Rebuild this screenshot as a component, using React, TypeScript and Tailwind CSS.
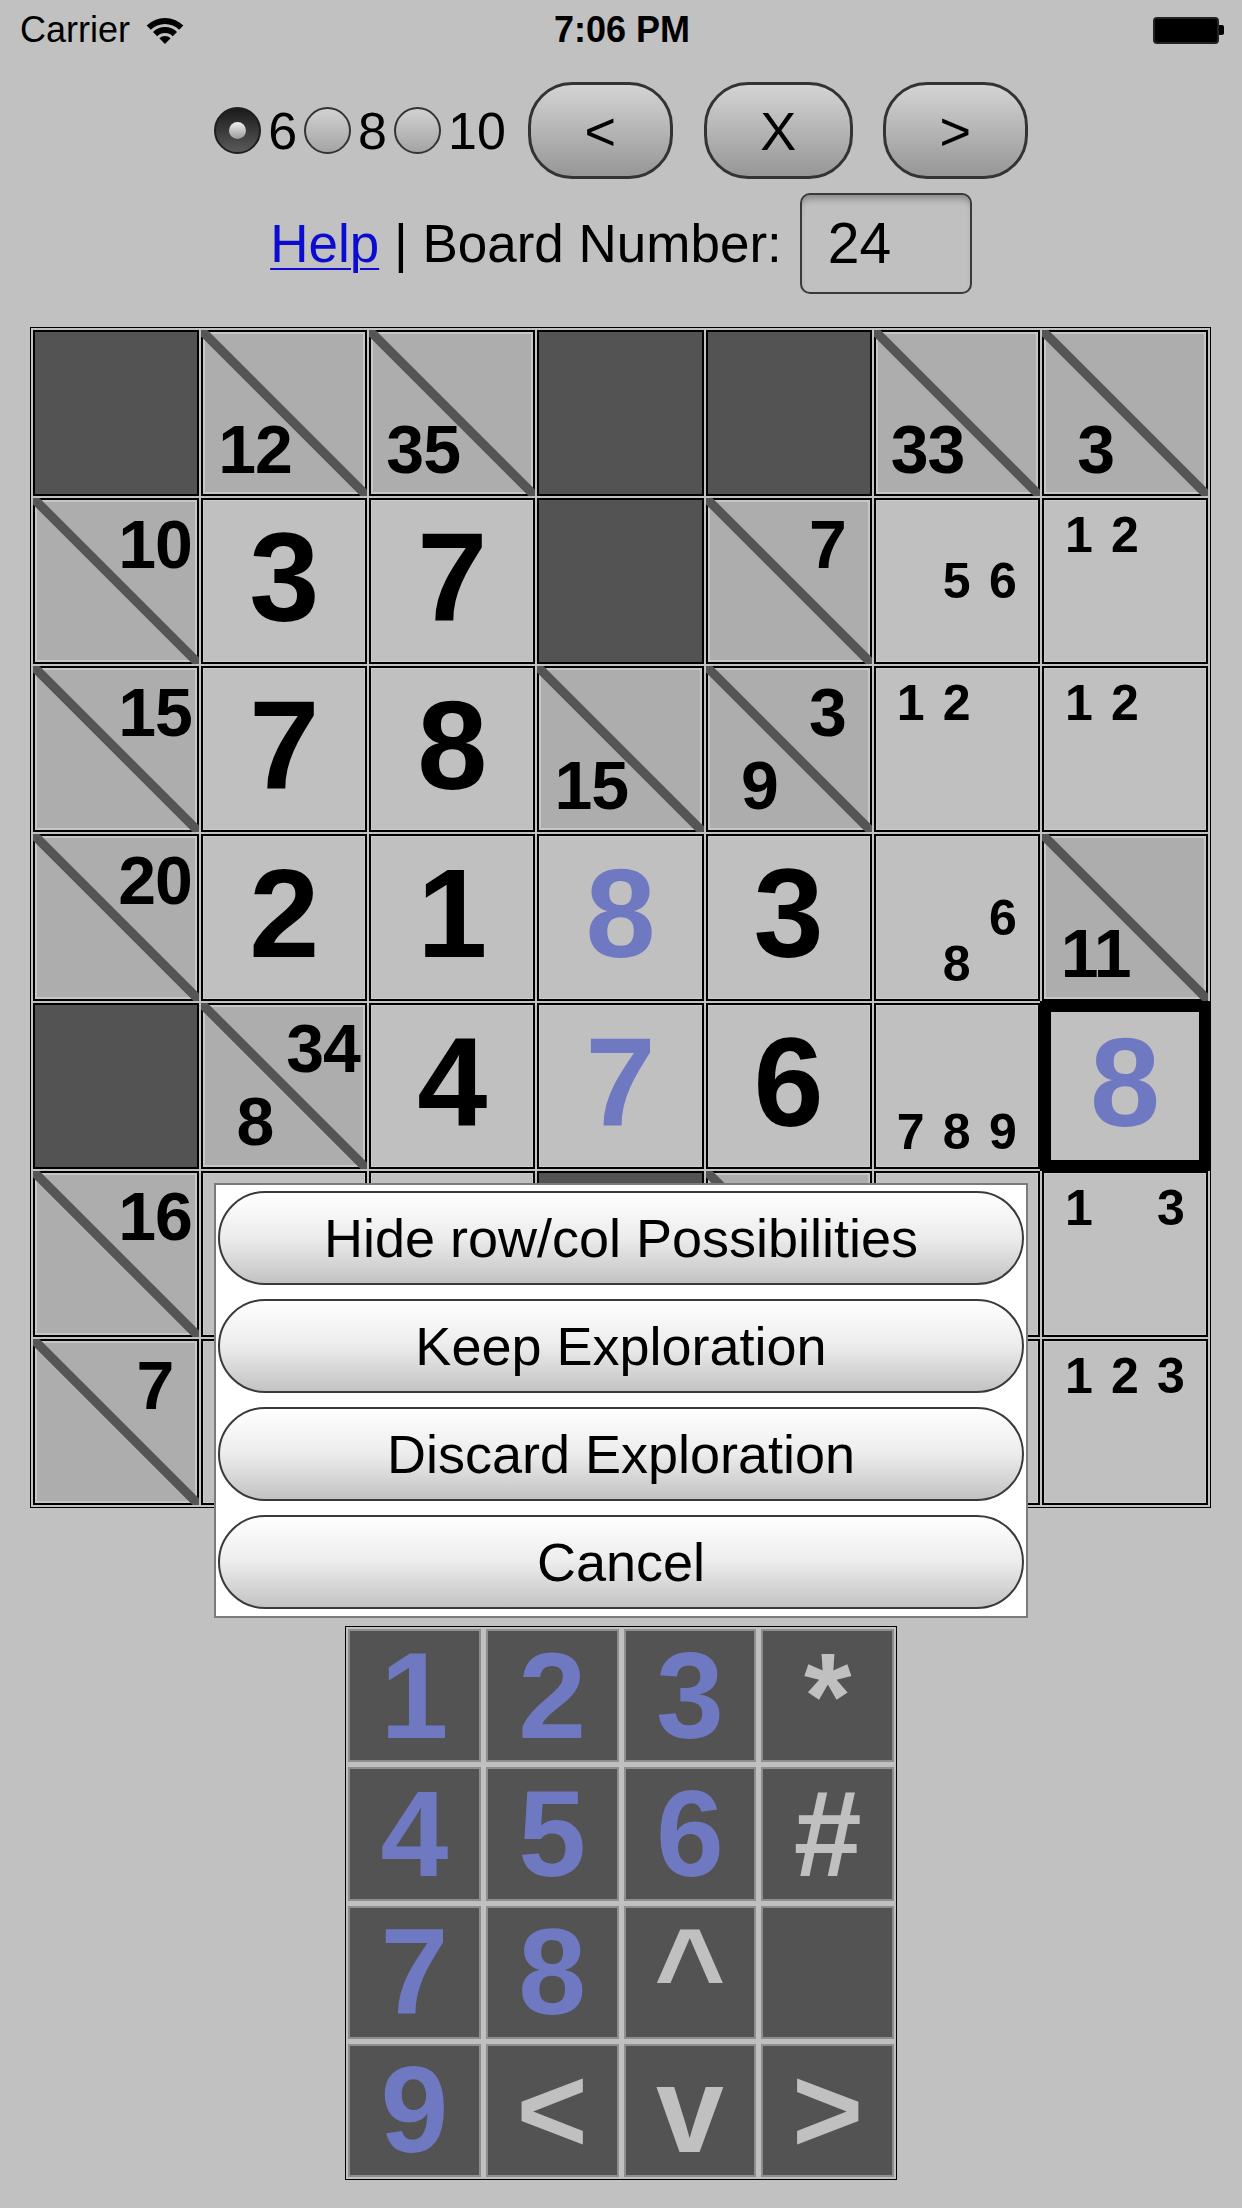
import React from "react";

type Cell =
  | { t: "dark" }
  | { t: "clue"; r?: number; d?: number }
  | { t: "val"; v: number; blue?: boolean; sel?: boolean }
  | { t: "pen"; p: number[] }
  | { t: "empty" };

const D: Cell = { t: "dark" };
const E: Cell = { t: "empty" };
const c = (r?: number, d?: number): Cell => ({ t: "clue", r, d });
const v = (n: number, blue = false, sel = false): Cell => ({ t: "val", v: n, blue, sel });
const p = (...n: number[]): Cell => ({ t: "pen", p: n });

// rows 5 and 6 are mostly covered by the popup menu
const board: Cell[][] = [
  [D, c(undefined, 12), c(undefined, 35), D, D, c(undefined, 33), c(undefined, 3)],
  [c(10), v(3), v(7), D, c(7), p(5, 6), p(1, 2)],
  [c(15), v(7), v(8), c(undefined, 15), c(3, 9), p(1, 2), p(1, 2)],
  [c(20), v(2), v(1), v(8, true), v(3), p(6, 8), c(undefined, 11)],
  [D, c(34, 8), v(4), v(7, true), v(6), p(7, 8, 9), v(8, true, true)],
  [c(16), E, E, D, c(), E, p(1, 3)],
  [c(7), E, E, E, E, E, p(1, 2, 3)],
];

const keys = ["1", "2", "3", "*", "4", "5", "6", "#", "7", "8", "^", "", "9", "<", "v", ">"];
const menu = ["Hide row/col Possibilities", "Keep Exploration", "Discard Exploration", "Cancel"];

function BoardCell({ cell }: { cell: Cell }) {
  if (cell.t === "dark") {
    return <div className="border-2 border-black bg-[#535353]" />;
  }
  if (cell.t === "clue") {
    return (
      <div className="relative border-2 border-black bg-[#adadad] shadow-[inset_0_0_0_2px_#c6c6c6]">
        <svg className="absolute left-[-2px] top-[-2px] h-[calc(100%+4px)] w-[calc(100%+4px)]" viewBox="0 0 100 100">
          <line x1="0" y1="0" x2="100" y2="100" stroke="#555555" strokeWidth="5.5" />
        </svg>
        {cell.r !== undefined && (
          <span className="absolute left-[74%] top-[27%] -translate-x-1/2 -translate-y-1/2 text-[68px] font-bold leading-none tracking-[-1px] text-black">
            {cell.r}
          </span>
        )}
        {cell.d !== undefined && (
          <span className="absolute left-[32%] top-[72%] -translate-x-1/2 -translate-y-1/2 text-[68px] font-bold leading-none tracking-[-1px] text-black">
            {cell.d}
          </span>
        )}
      </div>
    );
  }
  if (cell.t === "val") {
    return (
      <div
        className={
          cell.sel
            ? "m-[-2px] flex items-center justify-center border-[11px] border-black bg-[#c0c0c0] pb-[6px]"
            : "flex items-center justify-center border-2 border-black bg-[#c0c0c0] pb-[6px] shadow-[inset_0_0_0_1px_#cbcbcb]"
        }
      >
        <span className={`text-[126px] font-bold leading-none ${cell.blue ? "text-[#6f79c2]" : "text-black"}`}>
          {cell.v}
        </span>
      </div>
    );
  }
  if (cell.t === "pen") {
    return (
      <div className="grid grid-cols-3 grid-rows-3 border-2 border-black bg-[#c0c0c0] p-[12px] shadow-[inset_0_0_0_1px_#cbcbcb]">
        {[1, 2, 3, 4, 5, 6, 7, 8, 9].map((n) => (
          <div key={n} className="flex items-center justify-center text-[50px] font-bold leading-none text-black">
            {cell.p.includes(n) ? n : ""}
          </div>
        ))}
      </div>
    );
  }
  return <div className="border-2 border-black bg-[#c0c0c0] shadow-[inset_0_0_0_1px_#cbcbcb]" />;
}

function Radio({ on }: { on?: boolean }) {
  return on ? (
    <div className="flex h-[47px] w-[47px] items-center justify-center rounded-full border-2 border-[#1e1e1e] bg-linear-to-b from-[#1c1c1c] to-[#5a5a5a]">
      <div className="h-[17px] w-[17px] rounded-full bg-linear-to-b from-[#f0f0f0] to-[#9a9a9a]" />
    </div>
  ) : (
    <div className="h-[47px] w-[47px] rounded-full border-2 border-[#333] bg-linear-to-b from-[#d2d2d2] to-[#a4a4a4]" />
  );
}

function NavButton({ label, w }: { label: string; w: string }) {
  return (
    <button
      type="button"
      className={`${w} flex h-[97px] items-center justify-center rounded-[44px] border-[3px] border-[#333] bg-linear-to-b from-[#d4d4d4] to-[#979797] text-[54px] leading-none text-black`}
    >
      {label}
    </button>
  );
}

export default function App() {
  return (
    <div className="relative h-[2208px] w-[1242px] overflow-hidden bg-[#c1c1c1] font-['Liberation_Sans',Arial,sans-serif] text-black">
      {/* status bar */}
      <div className="grid h-[60px] grid-cols-3 items-center px-[20px] pr-[18px] text-[36px]">
        <div className="flex items-center gap-[16px]">
          <span>Carrier</span>
          <svg width="38" height="27" viewBox="0 0 38 27">
            <path d="M19 27 L13.34 21.34 A8 8 0 0 1 24.66 21.34 Z" fill="#000" />
            <path d="M11.22 19.22 L6.98 14.98 A17 17 0 0 1 31.02 14.98 L26.78 19.22 A11 11 0 0 0 11.22 19.22 Z" fill="#000" />
            <path d="M4.86 12.86 L0.62 8.62 A26 26 0 0 1 37.38 8.62 L33.14 12.86 A20 20 0 0 0 4.86 12.86 Z" fill="#000" />
          </svg>
        </div>
        <div className="text-center font-bold">7:06 PM</div>
        <div className="flex items-center justify-end">
          <div className="h-[27px] w-[66px] rounded-[4px] border-2 border-[#222] bg-black" />
          <div className="h-[10px] w-[5px] rounded-r-[2px] bg-black" />
        </div>
      </div>

      {/* size + nav row */}
      <div className="mt-[22px] flex h-[97px] items-center justify-center">
        <div className="flex items-center gap-[7px] text-[52px] leading-none">
          <Radio on />
          <span>6</span>
          <Radio />
          <span>8</span>
          <Radio />
          <span>10</span>
        </div>
        <div className="ml-[22px]">
          <NavButton label="<" w="w-[145px]" />
        </div>
        <div className="ml-[31px]">
          <NavButton label="X" w="w-[149px]" />
        </div>
        <div className="ml-[30px]">
          <NavButton label=">" w="w-[145px]" />
        </div>
      </div>

      {/* help row */}
      <div className="mt-[14px] flex h-[101px] items-center justify-center text-[53px] leading-none">
        <a href="#" className="text-[#0c0cd0] underline decoration-2 underline-offset-[6px]">
          Help
        </a>
        <span className="whitespace-pre"> | Board Number:</span>
        <div className="ml-[18px] flex h-[101px] w-[172px] items-center rounded-[10px] border-2 border-[#3a3a3a] bg-[#c0c0c0] pl-[26px] text-[57px] shadow-[inset_0_7px_6px_-3px_rgba(0,0,0,0.28)]">
          24
        </div>
      </div>

      {/* board */}
      <div className="ml-[30px] mt-[33px] grid h-[1181px] w-[1181px] grid-cols-7 grid-rows-7 gap-[2px] border border-black bg-[#c2c2c2] p-[2px]">
        {board.flatMap((row, ri) => row.map((cell, ci) => <BoardCell key={`${ri}-${ci}`} cell={cell} />))}
      </div>

      {/* keypad */}
      <div className="mx-auto mt-[118px] grid h-[554px] w-[552px] grid-cols-4 grid-rows-4 gap-[5px] border border-black bg-[#c0c0c0] p-[2px]">
        {keys.map((k, i) => (
          <div
            key={i}
            className={`flex items-center justify-center border-2 border-[#8e8e8e] bg-[#535353] text-[122px] font-bold leading-none ${
              /[0-9]/.test(k) ? "text-[#6f79c2]" : "text-[#c0c0c0]"
            }`}
          >
            {k}
          </div>
        ))}
      </div>

      {/* popup menu */}
      <div className="absolute left-[214px] top-[1183px] flex h-[435px] w-[814px] flex-col gap-[14px] border-2 border-[#7b7b7b] bg-white px-[2px] py-[6px]">
        {menu.map((m) => (
          <button
            key={m}
            type="button"
            className="flex h-[94px] items-center justify-center rounded-full border-2 border-[#3a3a3a] bg-linear-to-b from-white via-[#ececec] to-[#c3c3c3] text-[54px] leading-none text-black"
          >
            {m}
          </button>
        ))}
      </div>
    </div>
  );
}
